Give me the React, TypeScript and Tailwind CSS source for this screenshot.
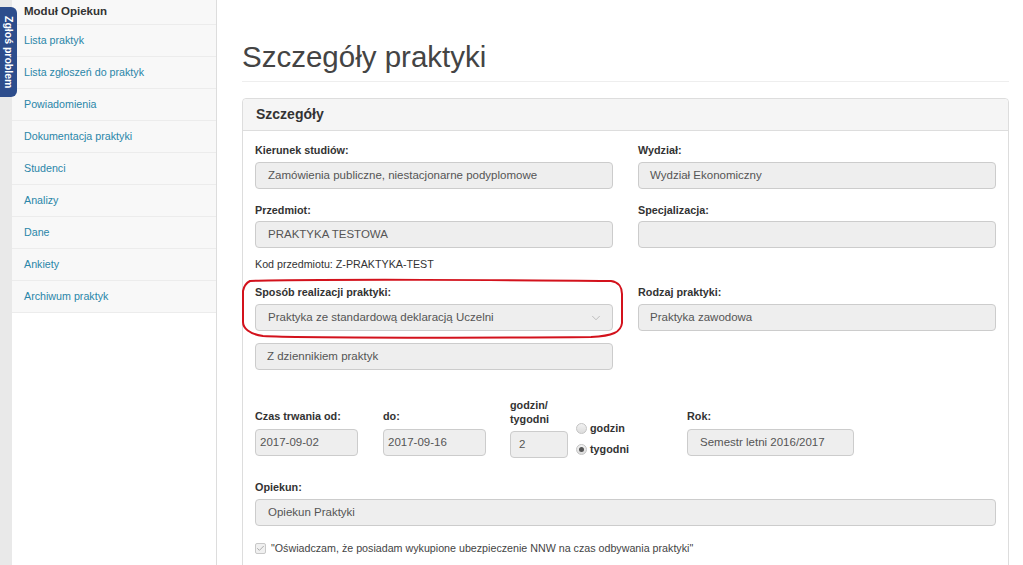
import React from 'react';
import { ChevronDown, Check } from 'lucide-react';

const menu = [
    'Lista praktyk',
    'Lista zgłoszeń do praktyk',
    'Powiadomienia',
    'Dokumentacja praktyki',
    'Studenci',
    'Analizy',
    'Dane',
    'Ankiety',
    'Archiwum praktyk',
];

function Label({ children }: { children: React.ReactNode }) {
    return <div className="text-[10.8px] leading-[14px] font-bold text-[#333]">{children}</div>;
}

function Field({ value, className = '' }: { value?: string; className?: string }) {
    return (
        <div className={`h-[27px] bg-[#eeeeee] border border-[#cccccc] rounded-[4px] flex items-center text-[11.5px] text-[#555] ${className}`}>
            {value}
        </div>
    );
}

function Radio({ checked }: { checked?: boolean }) {
    return (
        <span className="w-[11px] h-[11px] rounded-full border border-[#c4c4c4] bg-gradient-to-b from-[#f2f2f2] to-[#dcdcdc] flex items-center justify-center">
            {checked && <span className="w-[5px] h-[5px] rounded-full bg-[#555]" />}
        </span>
    );
}

export default function App() {
    return (
        <div className="flex w-[1023px] h-[565px] overflow-hidden bg-white relative" style={{ fontFamily: '"Liberation Sans", Arial, sans-serif' }}>
            {/* zgłoś problem tab */}
            <div className="absolute left-0 top-[7px] w-[17px] h-[90px] bg-[#2d4d8c] rounded-r-[6px] flex items-center justify-center z-10">
                <span className="text-white text-[10.5px] font-bold whitespace-nowrap [writing-mode:vertical-rl]">Zgłoś problem</span>
            </div>

            <div className="w-[12px] bg-[#e9e9e9] shrink-0" />

            {/* sidebar */}
            <div className="w-[205px] shrink-0 border-r border-[#dddddd] bg-white">
                <div className="bg-[#f8f8f8]">
                    <div className="h-[25px] flex items-center pl-[12px] text-[11.5px] font-bold text-[#333] border-b border-[#ececec]">Moduł Opiekun</div>
                    {menu.map(m => (
                        <div key={m} className="h-[32px] flex items-center pl-[12px] text-[10.7px] text-[#2a86a8] border-b border-[#ececec]">{m}</div>
                    ))}
                </div>
            </div>

            {/* main */}
            <div className="flex-1 pl-[25px] pr-[14px]">
                <h1 className="text-[29.5px] leading-[36px] text-[#444] mt-[39px] mb-[6px]">Szczegóły praktyki</h1>
                <div className="border-t border-[#eeeeee]" />

                <div className="mt-[16px] border border-[#dddddd] rounded-[4px]">
                    <div className="h-[32px] bg-[#f5f5f5] border-b border-[#dddddd] rounded-t-[4px] flex items-center pl-[13px] text-[14px] font-bold text-[#333]">Szczegóły</div>

                    <div className="px-[12px] pt-[12px]">
                        <div className="grid grid-cols-2 gap-x-[25px]">
                            <div>
                                <Label>Kierunek studiów:</Label>
                                <Field className="mt-[5px] pl-[12px]" value="Zamówienia publiczne, niestacjonarne podyplomowe" />
                            </div>
                            <div>
                                <Label>Wydział:</Label>
                                <Field className="mt-[5px] pl-[11px]" value="Wydział Ekonomiczny" />
                            </div>

                            <div className="mt-[14px]">
                                <Label>Przedmiot:</Label>
                                <Field className="mt-[4px] pl-[12px]" value="PRAKTYKA TESTOWA" />
                                <div className="mt-[9px] text-[10.7px] leading-[14px] text-[#333]">Kod przedmiotu: Z-PRAKTYKA-TEST</div>
                            </div>
                            <div className="mt-[14px]">
                                <Label>Specjalizacja:</Label>
                                <Field className="mt-[4px]" />
                            </div>

                            <div className="mt-[14px] relative">
                                <svg className="absolute left-[-14px] top-[-7px] pointer-events-none" width="384" height="62" viewBox="0 0 384 62" fill="none">
                                    <path d="M9 3 C 60 1, 300 2, 370 3 C 378 4, 381 10, 381 16 L 381 45 C 380 54, 372 58, 350 59 C 260 60, 60 60, 22 58 C 8 56, 2 50, 2 44 L 2 13 C 3 8, 5 5, 9 3 Z" stroke="#d3121c" strokeWidth="2" />
                                </svg>
                                <Label>Sposób realizacji praktyki:</Label>
                                <div className="mt-[5px] h-[27px] bg-[#eeeeee] border border-[#cccccc] rounded-[4px] flex items-center justify-between pl-[12px] pr-[9px] text-[11.5px] text-[#555]">
                                    <span>Praktyka ze standardową deklaracją Uczelni</span>
                                    <ChevronDown size={14} strokeWidth={1} color="#9a9a9a" />
                                </div>
                                <Field className="mt-[12px] pl-[11px]" value="Z dziennikiem praktyk" />
                            </div>
                            <div className="mt-[14px]">
                                <Label>Rodzaj praktyki:</Label>
                                <Field className="mt-[5px] pl-[11px]" value="Praktyka zawodowa" />
                            </div>
                        </div>

                        {/* czas trwania */}
                        <div className="mt-[26px] flex items-end">
                            <div className="w-[103px]">
                                <Label>Czas trwania od:</Label>
                                <Field className="mt-[6px] pl-[4px]" value="2017-09-02" />
                            </div>
                            <div className="w-[103px] ml-[25px]">
                                <Label>do:</Label>
                                <Field className="mt-[6px] pl-[4px]" value="2017-09-16" />
                            </div>
                            <div className="w-[58px] ml-[24px] translate-y-[2px]">
                                <Label>godzin/<br />tygodni</Label>
                                <Field className="mt-[5px] pl-[8px]" value="2" />
                            </div>
                            <div className="w-[60px] ml-[8px] flex flex-col gap-[7px] text-[10.8px] leading-[14px] font-bold text-[#333]">
                                <div className="flex items-center gap-[3px]"><Radio /> godzin</div>
                                <div className="flex items-center gap-[3px]"><Radio checked /> tygodni</div>
                            </div>
                            <div className="w-[167px] ml-[51px]">
                                <Label>Rok:</Label>
                                <Field className="mt-[6px] pl-[12px]" value="Semestr letni 2016/2017" />
                            </div>
                        </div>

                        <div className="mt-[24px]">
                            <Label>Opiekun:</Label>
                            <Field className="mt-[5px] pl-[12px]" value="Opiekun Praktyki" />
                        </div>

                        <div className="mt-[14px] flex items-center gap-[5px] text-[10.7px] text-[#444]">
                            <span className="w-[11px] h-[11px] border border-[#c8c8c8] bg-[#f0f0f0] rounded-[2px] flex items-center justify-center">
                                <Check size={9} strokeWidth={2.5} color="#a8a8a8" />
                            </span>
                            <span>"Oświadczam, że posiadam wykupione ubezpieczenie NNW na czas odbywania praktyki"</span>
                        </div>
                        <div className="h-[40px]" />
                    </div>
                </div>
            </div>
        </div>
    );
}
